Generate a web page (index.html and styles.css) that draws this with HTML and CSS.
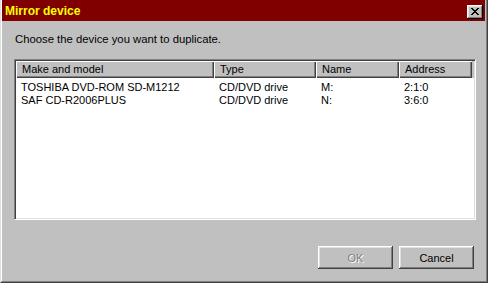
FILE: index.html
```html
<!DOCTYPE html>
<html lang="en">
<head>
    <meta charset="UTF-8">
    <title>Mirror device</title>
    <link rel="stylesheet" href="styles.css">
</head>
<body>
    <div class="window">
        <div class="frame">
            <div class="titlebar">
                <span class="title">Mirror device</span>
                <button class="close-btn" title="Close">
                    <svg width="8" height="7" viewBox="0 0 8 7">
                        <path d="M0 0h2v1h1v1h2v-1h1v-1h2v1h-1v1h-1v1h-1v1h1v1h1v1h1v1h-2v-1h-1v-1h-2v1h-1v1h-2v-1h1v-1h1v-1h1v-1h-1v-1h-1v-1h-1z" fill="#000"/>
                    </svg>
                </button>
            </div>
            <div class="content">
                <p class="prompt">Choose the device you want to duplicate.</p>
                <div class="listview">
                    <div class="list-header">
                        <div class="col col-model">Make and model</div>
                        <div class="col col-type">Type</div>
                        <div class="col col-name">Name</div>
                        <div class="col col-addr">Address</div>
                    </div>
                    <div class="list-body">
                        <div class="row">
                            <div class="cell col-model">TOSHIBA DVD-ROM SD-M1212</div>
                            <div class="cell col-type">CD/DVD drive</div>
                            <div class="cell col-name">M:</div>
                            <div class="cell col-addr">2:1:0</div>
                        </div>
                        <div class="row">
                            <div class="cell col-model">SAF CD-R2006PLUS</div>
                            <div class="cell col-type">CD/DVD drive</div>
                            <div class="cell col-name">N:</div>
                            <div class="cell col-addr">3:6:0</div>
                        </div>
                    </div>
                </div>
                <div class="buttons">
                    <button class="btn" disabled>OK</button>
                    <button class="btn">Cancel</button>
                </div>
            </div>
        </div>
    </div>
</body>
</html>
```

FILE: styles.css
```css
html, body {
    margin: 0;
    padding: 0;
}
body {
    width: 488px;
    height: 283px;
    overflow: hidden;
    background-color: #c0c0c0;
    font-family: "Liberation Sans", Arial, sans-serif;
    font-size: 11px;
    color: #000;
}
.window {
    height: 283px;
    box-sizing: border-box;
    border-left: 1px solid #dfdfdf;
    border-right: 1px solid #404040;
    border-bottom: 1px solid #404040;
}
.frame {
    height: 100%;
    box-sizing: border-box;
    border-left: 1px solid #fff;
    border-right: 1px solid #808080;
    border-bottom: 1px solid #808080;
    padding-right: 1px;
    display: flex;
    flex-direction: column;
}
.titlebar {
    height: 21px;
    background-color: #800000;
    display: flex;
    align-items: center;
    justify-content: space-between;
    padding: 0 2px 0 3px;
    box-sizing: border-box;
}
.title {
    color: #ffff00;
    font-weight: bold;
    font-size: 12px;
}
.close-btn {
    width: 16px;
    height: 14px;
    padding: 0;
    border: none;
    background-color: #c0c0c0;
    box-shadow: inset -1px -1px #000, inset 1px 1px #fff, inset -2px -2px #808080, inset 2px 2px #dfdfdf;
    display: flex;
    align-items: center;
    justify-content: center;
    padding-left: 1px;
    padding-top: 1px;
    box-sizing: border-box;
    margin-top: 2px;
}
.close-btn svg {
    display: block;
    margin-left: -1px;
    margin-top: -1px;
}
.content {
    flex: 1;
    padding: 0 9px 0 12px;
    display: flex;
    flex-direction: column;
}
.prompt {
    margin: 12px 0 13px 1px;
    line-height: 13px;
    font-size: 11.3px;
}
.listview {
    height: 161px;
    box-sizing: border-box;
    background-color: #fff;
    border-top: 1px solid #808080;
    border-left: 1px solid #808080;
    border-right: 1px solid #fff;
    border-bottom: 1px solid #fff;
    box-shadow: inset 1px 1px #404040, inset -1px -1px #dfdfdf;
    padding: 1px;
    display: flex;
    flex-direction: column;
}
.list-header {
    display: flex;
    height: 17px;
    background-color: #c0c0c0;
    flex-shrink: 0;
}
.list-header .col {
    box-sizing: border-box;
    padding-left: 6px;
    line-height: 16px;
    box-shadow: inset 1px 1px #fff, inset -1px -1px #404040, inset -2px -2px #808080;
    white-space: nowrap;
}
.col-model { width: 198px; }
.col-type { width: 102px; }
.col-name { width: 83px; }
.col-addr { width: 73px; }
.list-body {
    padding-top: 3px;
}
.row {
    display: flex;
    height: 13px;
    line-height: 13px;
}
.cell {
    box-sizing: border-box;
    padding-left: 5px;
    white-space: nowrap;
}
.buttons {
    display: flex;
    justify-content: flex-end;
    gap: 6px;
    margin-top: 26px;
    padding-right: 2px;
}
.btn {
    width: 75px;
    height: 23px;
    border: none;
    background-color: #c0c0c0;
    font-family: "Liberation Sans", Arial, sans-serif;
    font-size: 11px;
    color: #000;
    padding: 0;
    box-shadow: inset -1px -1px #404040, inset 1px 1px #fff, inset -2px -2px #808080, inset 2px 2px #dfdfdf;
}
.btn:disabled {
    color: #808080;
    text-shadow: 1px 1px #fff;
}
```
